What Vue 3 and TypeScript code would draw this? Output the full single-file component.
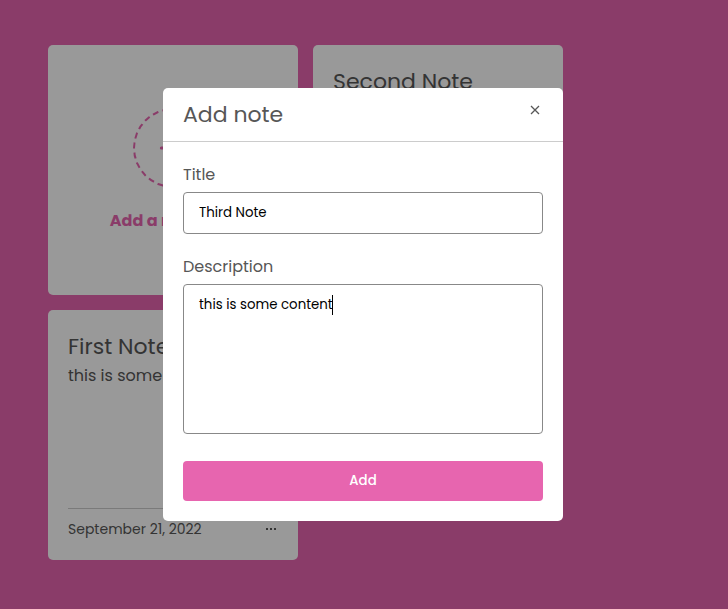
<script setup lang="ts">
import { onMounted, ref } from 'vue'

interface Note {
  title: string
  description: string
  date: string
}

const notes = ref<Note[]>([
  { title: 'Second Note', description: 'this is some content', date: 'September 21, 2022' },
  { title: 'First Note', description: 'this is some content', date: 'September 21, 2022' },
])

const open = ref(true)
const title = ref('Third Note')
const description = ref('this is some content')
const descriptionBox = ref<HTMLTextAreaElement | null>(null)

function addNote(): void {
  const date = new Date().toLocaleDateString('en-US', { month: 'long', day: 'numeric', year: 'numeric' })
  notes.value.unshift({ title: title.value, description: description.value, date })
  title.value = ''
  description.value = ''
  open.value = false
}

onMounted(() => {
  const box = descriptionBox.value
  if (box) {
    box.focus()
    box.setSelectionRange(box.value.length, box.value.length)
  }
})
</script>

<template>
  <main class="board">
    <button class="card add-card" type="button" @click="open = true">
      <span class="add-icon">
        <svg viewBox="0 0 24 24" width="40" height="40" aria-hidden="true">
          <path d="M5 12h14M12 5v14" fill="none" stroke="currentColor" stroke-width="1.8" stroke-linecap="round" />
        </svg>
      </span>
      <span class="add-label">Add a new note</span>
    </button>
    <article v-for="note in notes" :key="note.title" class="card note">
      <div class="note-body">
        <h2>{{ note.title }}</h2>
        <p>{{ note.description }}</p>
      </div>
      <footer class="note-footer">
        <span>{{ note.date }}</span>
        <button class="more" type="button" aria-label="Note options">
          <svg viewBox="0 0 14 14" width="14" height="14" aria-hidden="true">
            <path d="M2 5h2v2H2zM6 5h2v2H6zM10 5h2v2h-2z" fill="currentColor" />
          </svg>
        </button>
      </footer>
    </article>
  </main>

  <div v-if="open" class="overlay">
    <section class="modal" role="dialog" aria-labelledby="modal-title">
      <header class="modal-header">
        <h1 id="modal-title">Add note</h1>
        <button class="close" type="button" aria-label="Close" @click="open = false">
          <svg viewBox="0 0 10 10" width="10" height="10" aria-hidden="true">
            <path d="M1 1l8 8M9 1l-8 8" fill="none" stroke="currentColor" stroke-width="1.3" />
          </svg>
        </button>
      </header>
      <form class="form" @submit.prevent="addNote">
        <div class="field">
          <label for="note-title">Title</label>
          <input id="note-title" v-model="title" type="text" />
        </div>
        <div class="field">
          <label for="note-description">Description</label>
          <div class="editor">
            <textarea id="note-description" ref="descriptionBox" v-model="description"></textarea>
            <div class="caret-layer" aria-hidden="true">{{ description }}<span class="caret"></span></div>
          </div>
        </div>
        <button class="submit" type="submit">Add</button>
      </form>
    </section>
  </div>
</template>

<style>
body {
  background: #e765af;
}
</style>

<style scoped>
* {
  box-sizing: border-box;
  margin: 0;
}

.board,
.overlay,
button,
input,
textarea {
  font-family: Poppins, Inter, "Open Sans", sans-serif;
}

.board {
  display: grid;
  grid-template-columns: repeat(auto-fill, 250px);
  grid-auto-rows: 250px;
  gap: 15px;
  padding: 45px 48px;
}

.card {
  background: #fff;
  border: 0;
  border-radius: 5px;
  padding: 20px;
}

.add-card {
  display: flex;
  flex-direction: column;
  align-items: center;
  justify-content: center;
  gap: 21px;
  color: #e765af;
  cursor: pointer;
}

.add-icon {
  display: grid;
  place-items: center;
  width: 80px;
  height: 80px;
  border: 2px dashed currentColor;
  border-radius: 50%;
}

.add-label {
  font-size: 16px;
  line-height: 24px;
  font-weight: 700;
}

.note {
  display: flex;
  flex-direction: column;
  justify-content: space-between;
  color: #575757;
}

h1,
h2 {
  font-size: 22px;
  line-height: 33px;
  font-weight: 400;
}

.note p {
  font-size: 16px;
  line-height: 26px;
}

.note-footer {
  display: flex;
  align-items: center;
  justify-content: space-between;
  padding-top: 10px;
  border-top: 1px solid #ccc;
  font-size: 14px;
  line-height: 21px;
}

.more,
.close {
  display: grid;
  padding: 0;
  border: 0;
  background: none;
  color: inherit;
  cursor: pointer;
}

.overlay {
  position: fixed;
  inset: 0;
  display: grid;
  place-items: center;
  padding-right: 2px;
  background: rgba(0, 0, 0, 0.4);
}

.modal {
  width: 100%;
  max-width: 400px;
  background: #fff;
  border-radius: 5px;
  color: #575757;
}

.modal-header {
  display: flex;
  align-items: flex-start;
  justify-content: space-between;
  padding: 10px 20px;
  border-bottom: 1px solid #ccc;
}

.close {
  padding: 7px 3px;
}

.form {
  display: flex;
  flex-direction: column;
  gap: 20px;
  padding: 20px;
}

.field {
  display: flex;
  flex-direction: column;
  gap: 4px;
}

label {
  font-size: 16px;
  line-height: 26px;
}

input,
textarea {
  width: 100%;
  border: 1px solid #888;
  border-radius: 4px;
  padding: 10px 15px;
  background: #fff;
  color: #000;
  line-height: 20px;
  outline: none;
}

input {
  height: 42px;
}

.editor {
  position: relative;
  display: grid;
}

textarea {
  height: 150px;
  resize: none;
  caret-color: transparent;
}

.caret-layer {
  position: absolute;
  inset: 0;
  padding: 10px 15px;
  border: 1px solid transparent;
  font-size: smaller;
  line-height: 20px;
  color: transparent;
  white-space: pre-wrap;
  pointer-events: none;
  visibility: hidden;
}

.editor:focus-within .caret-layer {
  visibility: visible;
}

.caret {
  display: inline-block;
  width: 1px;
  height: 20px;
  margin-left: -1px;
  background: #000;
  vertical-align: top;
}

.submit {
  height: 40px;
  margin-top: 7px;
  border: 0;
  border-radius: 4px;
  background: #e765af;
  color: #fff;
  font-weight: 500;
  cursor: pointer;
}
</style>
